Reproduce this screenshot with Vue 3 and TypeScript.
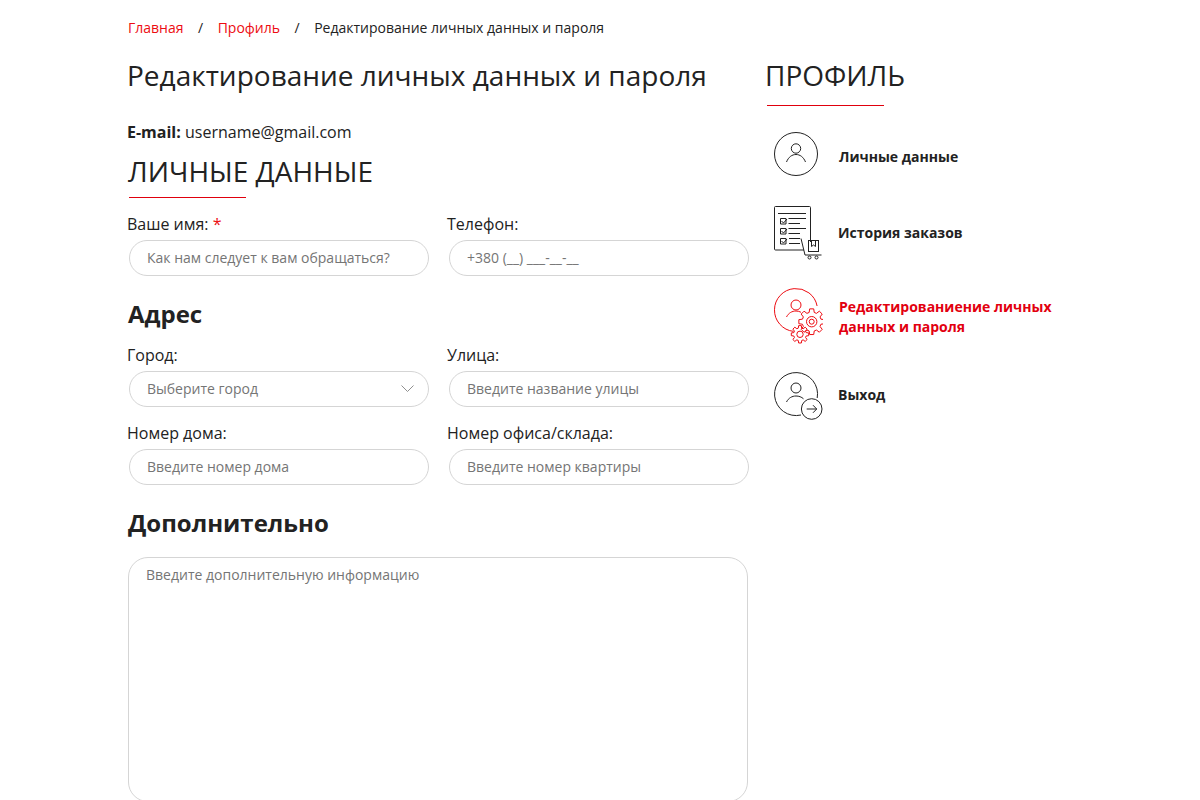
<script setup lang="ts">
interface NavItem { label: string; icon: string; h: number; active?: boolean }
const nav: NavItem[] = [
  { label: 'Личные данные', icon: 'user', h: 50 },
  { label: 'История заказов', icon: 'orders', h: 54 },
  { label: 'Редактированиение личных данных и пароля', icon: 'edit', h: 56, active: true },
  { label: 'Выход', icon: 'exit', h: 48 },
]

function gear(cx: number, cy: number, ro: number, ri: number, teeth: number): string {
  const pts: string[] = []
  const step = (Math.PI * 2) / teeth
  for (let i = 0; i < teeth; i++) {
    const a = i * step - Math.PI / 2
    const offs: [number, number][] = [
      [-0.34, ri], [-0.2, ro], [0.2, ro], [0.34, ri],
    ]
    for (const [o, r] of offs) {
      const t = a + o * step
      pts.push(`${(cx + r * Math.cos(t)).toFixed(2)} ${(cy + r * Math.sin(t)).toFixed(2)}`)
    }
  }
  return 'M' + pts.join('L') + 'Z'
}
const bigGear = gear(38.7, 33.7, 13, 9.6, 8)
const smallGear = gear(27, 46.3, 8.8, 6.4, 8)
</script>

<template>
  <div class="page">
    <nav class="crumbs">
      <a class="link">Главная</a><span class="sep">/</span>
      <a class="link">Профиль</a><span class="sep">/</span>
      <span>Редактирование личных данных и пароля</span>
    </nav>
    <div class="cols">
      <main class="main">
        <h1>Редактирование личных данных и пароля</h1>
        <p class="email"><b>E-mail:</b> username@gmail.com</p>
        <h2 class="section">ЛИЧНЫЕ ДАННЫЕ</h2>
        <div class="grid first">
          <label class="field"><span>Ваше имя: <i>*</i></span><input placeholder="Как нам следует к вам обращаться?" /></label>
          <label class="field"><span>Телефон:</span><input placeholder="+380 (__) ___-__-__" /></label>
        </div>
        <h3>Адрес</h3>
        <div class="grid">
          <label class="field"><span>Город:</span>
            <div class="select">
              <input placeholder="Выберите город" />
              <svg class="chev" width="13" height="7" viewBox="0 0 13 7" fill="none"><path d="M.5.5l6 6 6-6" stroke="#8f8f8f" stroke-width="1" /></svg>
            </div>
          </label>
          <label class="field"><span>Улица:</span><input placeholder="Введите название улицы" /></label>
          <label class="field"><span>Номер дома:</span><input placeholder="Введите номер дома" /></label>
          <label class="field"><span>Номер офиса/склада:</span><input placeholder="Введите номер квартиры" /></label>
        </div>
        <h3>Дополнительно</h3>
        <textarea placeholder="Введите дополнительную информацию"></textarea>
      </main>
      <aside class="side">
        <h2 class="section profile">ПРОФИЛЬ</h2>
        <ul>
          <li v-for="n in nav" :key="n.icon" :class="[n.icon, { active: n.active }]">
            <svg class="ico" width="50" :height="n.h" :viewBox="`0 0 50 ${n.h}`" fill="none" stroke="currentColor" stroke-width="1">
              <template v-if="n.icon === 'user'">
                <circle cx="23" cy="22" r="21.500" />
                <circle cx="23" cy="16.500" r="4.700" />
                <path d="M13.500 30c2-5 5.500-7.500 9.500-7.500s7.500 2.500 9.500 7.500" />
              </template>
              <template v-else-if="n.icon === 'orders'">
                <path d="M37.500 36V1.500a1 1 0 0 0-1-1h-34a1 1 0 0 0-1 1V43a1 1 0 0 0 1 1H31" />
                <path d="M5 7.500h28M15.500 12.500H33M15.500 17.500H27M15.500 22.500H33M15.500 27.500H27M16 32.500h11M16 37.500h11" />
                <path d="M7.500 12.500h5.500v5.500H7.500zM7.500 22.500h5.500v5.500H7.500zM7.500 32.500h5.500v5.500H7.500z" />
                <path d="M8.500 15l2 2 3.500-4M8.500 25l2 2 3.500-4M8.500 35l2 2 3.500-4" />
                <path d="M28 32.500l4 16.500h16.500" />
                <rect x="35.500" y="34.500" width="10" height="11" />
                <path d="M38.500 34.500v6l2-1.500 2 1.500v-6" />
                <circle cx="36.500" cy="51.500" r="1.500" />
                <circle cx="43.500" cy="51.500" r="1.500" />
              </template>
              <template v-else-if="n.icon === 'edit'">
                <path d="M44.100 18A21.500 21.500 0 1 0 20.500 43.400" />
                <circle cx="23" cy="17" r="5" />
                <path d="M13.500 29c2-4 5.500-6 9.500-6 2 0 3.500.5 5 1.300" />
                <path :d="bigGear" />
                <circle cx="38.700" cy="33.700" r="5.200" />
                <circle cx="38.700" cy="33.700" r="2.500" />
                <path :d="smallGear" />
                <circle cx="27" cy="46.300" r="3.200" />
              </template>
              <template v-else>
                <path d="M44.200 26A21.500 21.500 0 1 0 28 43" />
                <circle cx="23" cy="16" r="5" />
                <path d="M13.500 30c2-4 5.500-6 9.500-6 3 0 5.500 1 7.500 2.800" />
                <circle cx="38.700" cy="37" r="10.300" />
                <path d="M33.700 37h10M40 33.200L43.700 37 40 40.800" />
              </template>
            </svg>
            <span class="lbl">{{ n.label }}</span>
          </li>
        </ul>
      </aside>
    </div>
  </div>
</template>

<style>
html, body { margin: 0; background: #fff; overflow: hidden; height: 800px; }
</style>

<style scoped>
.page {
  box-sizing: border-box;
  width: 1200px;
  padding: 18px 0 0 127px;
  font-family: "Open Sans", sans-serif;
  color: #222;
}
.crumbs { font-size: 14px; line-height: 19px; color: #222; display: flex; margin-left: 1px; }
.link { color: #ed0c12; }
.sep { margin: 0 14.5px; }
.cols { display: flex; margin-top: 19px; }
.main { width: 620px; }
.side { margin-left: 18px; width: 320px; }
h1 { margin: 0; font-weight: 400; font-size: 28px; line-height: 38px; }
.email { margin: 27px 0 0; font-size: 16px; line-height: 22px; }
.section {
  position: relative;
  margin: 9px 0 0 1px;
  font-weight: 400;
  font-size: 28px;
  line-height: 38px;
  padding-bottom: 8px;
}
.section::after {
  content: "";
  position: absolute;
  left: 1px;
  bottom: 0;
  width: 117px;
  height: 1px;
  background: #e0000d;
}
.profile { margin: 0; padding-bottom: 12px; }
.profile::after { left: 2px; }
.grid { display: grid; grid-template-columns: 302px 302px; column-gap: 18px; row-gap: 14px; margin-top: 13px; }
.grid.first { margin-top: 14px; }
.field { display: flex; flex-direction: column; font-size: 16px; line-height: 24px; }
.field span i { color: #ed0c12; font-style: normal; }
input, textarea {
  box-sizing: border-box;
  font-family: "Open Sans", sans-serif;
  font-size: 14px;
  color: #222;
  background: #fff;
  border: 1px solid #d5d5d5;
  outline: none;
}
input {
  display: block;
  width: 300px;
  height: 36px;
  margin: 4px 0 0 2px;
  padding: 0 17px 2px;
  border-radius: 18px;
}
input::placeholder, textarea::placeholder { color: #757575; opacity: 1; }
.select { position: relative; }
.chev { position: absolute; right: 15px; top: 18px; }
h3 { margin: 21px 0 0 1px; font-size: 24px; line-height: 33px; font-weight: 700; }
textarea {
  display: block;
  width: 620px;
  height: 245px;
  margin: 18px 0 0 1px;
  padding: 7px 17px;
  border-radius: 20px;
  resize: none;
}
ul { list-style: none; margin: 26px 0 0; padding: 0 0 0 8px; display: flex; flex-direction: column; }
li { display: flex; align-items: center; width: 300px; }
li.orders { margin-top: 24px; }
li.edit { margin-top: 28px; color: #e2000f; }
li.exit { margin-top: 28px; }
.ico { flex: none; color: #222; margin-right: 16px; }
li.active .ico { color: #ed0c12; }
.lbl { font-size: 14px; line-height: 20px; font-weight: 700; width: 230px; }
li.orders .lbl, li.exit .lbl { margin-left: -1px; }
li.edit .lbl { margin-top: 2px; }
li.exit .lbl { margin-top: -2px; }
</style>
